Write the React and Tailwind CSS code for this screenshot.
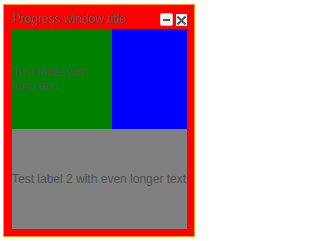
export default function App() {
  return (
    <div className="w-[201px] h-[241px] bg-white pt-1 pl-[3px]" style={{ fontFamily: '"Liberation Sans", Arial, sans-serif' }}>
      <div className="w-[192px] h-[233px] border border-[#ff9900] bg-[#ff0000] flex flex-col pl-2 pr-[7px] pb-[7px]">
        <div className="h-6 flex items-end justify-between pb-[3px]">
          <span className="text-[12px] leading-[14px] text-[#555555] pl-[1px]">Progress window title</span>
          <div className="flex items-end gap-[3px]">
            <div className="w-[13px] h-[13px] rounded-[2px] bg-[#f4f4f4] border border-[#c8c8c8] flex items-center justify-center">
              <div className="w-[7px] h-[2px] bg-[#555555]" />
            </div>
            <div className="w-[11px] h-[12px] bg-[#f0f0f0] flex items-center justify-center">
              <svg width="11" height="11" viewBox="0 0 11 11">
                <path d="M1.5 1.5 L9.5 9.5 M9.5 1.5 L1.5 9.5" stroke="#555555" strokeWidth="2" />
              </svg>
            </div>
          </div>
        </div>
        <div className="flex-1 flex flex-col">
          <div className="h-[100px] flex">
            <div className="w-[100px] bg-[#008000] flex items-center text-[12px] leading-[14px] text-[#505050]">
              Test label with long text
            </div>
            <div className="flex-1 bg-[#0000ff]" />
          </div>
          <div className="flex-1 bg-[#808080] flex items-center text-[12px] leading-[14px] text-[#505050] whitespace-nowrap">
            Test label 2 with even longer text
          </div>
        </div>
      </div>
    </div>
  );
}
